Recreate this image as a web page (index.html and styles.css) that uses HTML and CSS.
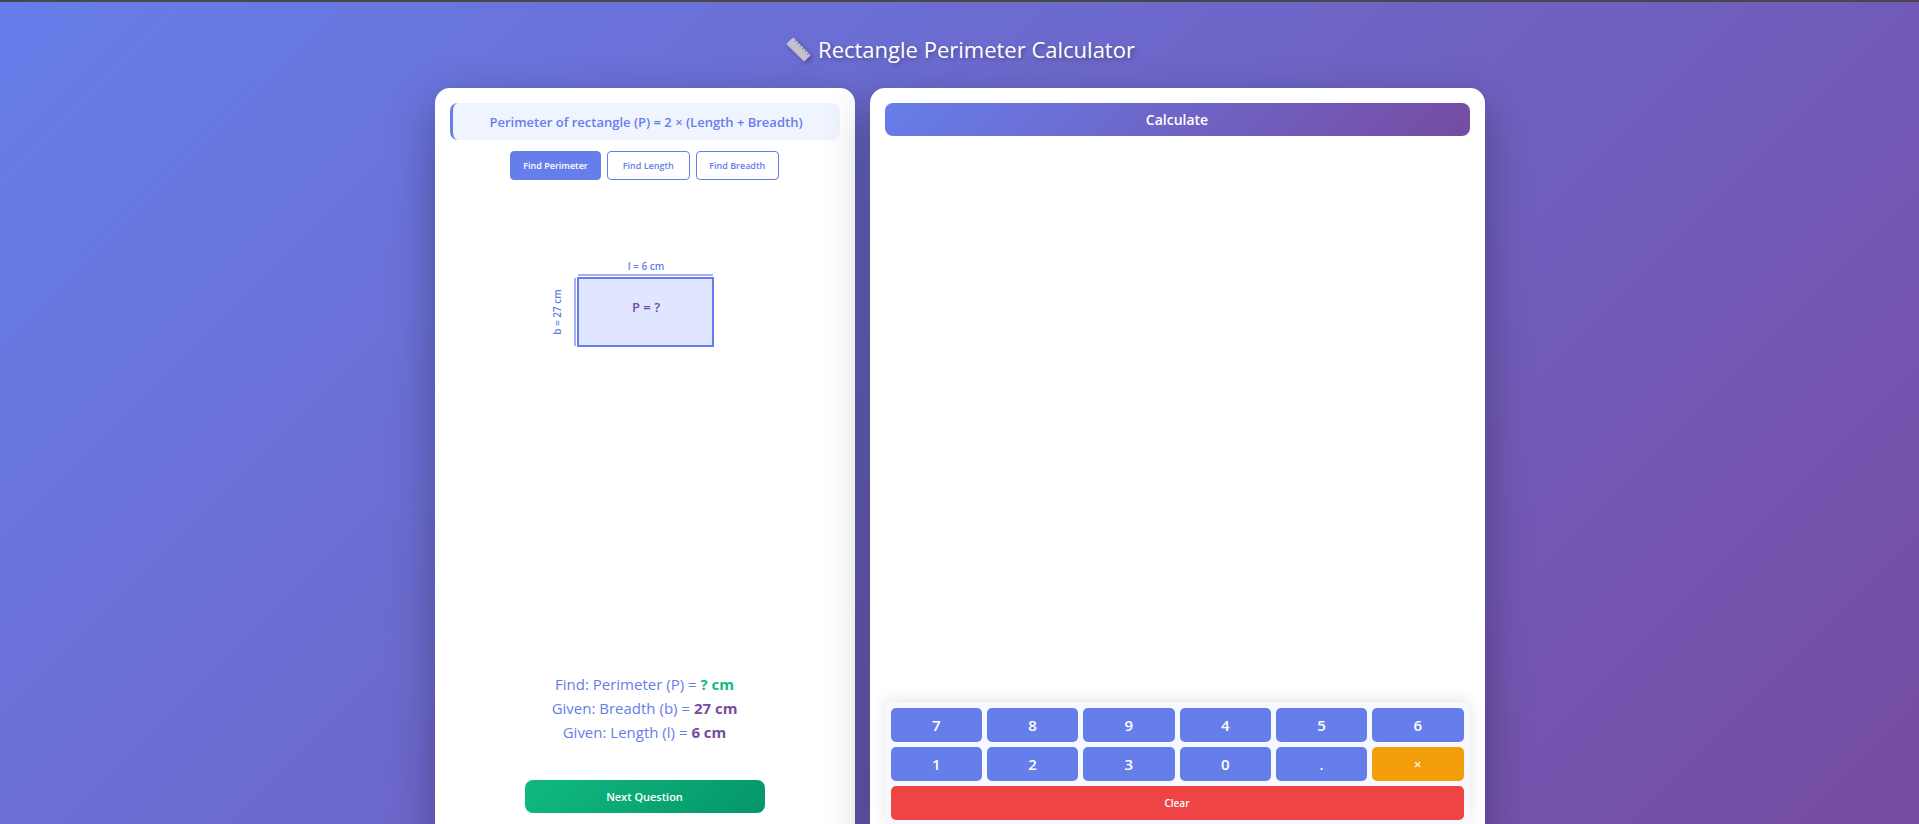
FILE: index.html
```html
<!DOCTYPE html>
<html lang="en">
<head>
  <meta charset="UTF-8" />
  <meta name="viewport" content="width=device-width, initial-scale=1.0"/>
  <title>Rectangle Perimeter Calculator</title>
  <link rel="stylesheet" href="styles.css">
</head>
<body>
  <header class="header">
    <svg class="ruler" viewBox="0 0 28 28" aria-hidden="true">
      <path d="M3 8 L8.500 3 Q9.500 2.500 10 3 L26 19.500 Q26.500 20.500 26 21 L21 25.700 Q20 26.200 19.500 25.700 L3 9.500 Q2.500 8.700 3 8 Z" fill="#c4c1cc" />
      <path d="M3 9.500 L19.500 25.700 Q20 26.200 21 25.700" fill="none" stroke="#b5b1be" />
      <path d="M12 5.500l-1.200 1.200M14.500 8l-1.200 1.200M17 10.600l-1.200 1.200M19.500 13.200l-1.200 1.200M22 15.800l-1.200 1.200M24.500 18.400l-1.200 1.200" stroke="#8377c4" stroke-width="1.200" />
    </svg>
    <h1>Rectangle Perimeter Calculator</h1>
  </header>

  <main class="container">
    <section class="panel left-panel">
      <div class="formula">Perimeter of rectangle (P) = 2 × (Length + Breadth)</div>

      <div class="modes">
        <button type="button" class="mode-btn active">Find Perimeter</button>
        <button type="button" class="mode-btn">Find Length</button>
        <button type="button" class="mode-btn">Find Breadth</button>
      </div>

      <div class="figure">
        <svg class="shape" viewBox="0 0 240 120" role="img" aria-label="Rectangle with length and breadth">
          <rect x="53" y="38" width="135" height="68" fill="#e0e6ff" stroke="#667eea" stroke-width="2" />
          <path d="M53 35H188M50 38V106" stroke="#667eea" stroke-width="2" stroke-opacity="0.6" />
          <text class="side" x="121" y="30">l = 6 cm</text>
          <text class="side" transform="translate(36 72) rotate(-90)">b = 27 cm</text>
          <text class="unknown" x="121" y="72">P = ?</text>
        </svg>
      </div>

      <div class="info">
        <p>Find: Perimeter (P) = <b class="find">? cm</b></p>
        <p>Given: Breadth (b) = <b>27 cm</b></p>
        <p>Given: Length (l) = <b>6 cm</b></p>
      </div>

      <button type="button" class="next-btn">Next Question</button>
    </section>

    <section class="panel right-panel">
      <h2 class="calc-title">Calculate</h2>
      <div class="work"></div>
      <div class="keypad">
        <button type="button">7</button>
        <button type="button">8</button>
        <button type="button">9</button>
        <button type="button">4</button>
        <button type="button">5</button>
        <button type="button">6</button>
        <button type="button">1</button>
        <button type="button">2</button>
        <button type="button">3</button>
        <button type="button">0</button>
        <button type="button">.</button>
        <button type="button" class="operator">×</button>
        <button type="button" class="clear">Clear</button>
      </div>
    </section>
  </main>
</body>
</html>
```

FILE: styles.css
```css
* {
  box-sizing: border-box;
  margin: 0;
  padding: 0;
}
body {
  font-family: 'Segoe UI', 'Open Sans', sans-serif;
  background: linear-gradient(135deg, #667eea 0%, #764ba2 100%);
  height: 100vh;
  overflow: hidden;
  border-top: 2px solid #484848;
}
.header {
  display: flex;
  justify-content: center;
  align-items: center;
  gap: 6px;
  height: 86px;
  padding-top: 8px;
  color: white;
}
.header h1 {
  font-size: 22px;
  font-weight: 400;
  text-shadow: 2px 2px 4px rgba(0,0,0,0.3);
}
.ruler {
  width: 28px;
  height: 28px;
  filter: drop-shadow(2px 2px 2px rgba(0,0,0,0.3));
}
.container {
  display: grid;
  grid-template-columns: 420fr 615fr;
  gap: 15px;
  max-width: 1050px;
  height: calc(100vh - 71px);
  margin: 0 auto;
}
.panel {
  display: flex;
  flex-direction: column;
  background: white;
  border-radius: 15px;
  padding: 15px;
  box-shadow: 0 15px 45px rgba(0,0,0,0.3);
}
button {
  font-family: inherit;
  border: none;
  cursor: pointer;
}
.formula {
  background: #f0f4ff;
  border-left: 3px solid #667eea;
  border-radius: 8px;
  padding: 9px 8px 7px;
  color: #667eea;
  font-size: 13px;
  font-weight: 600;
  line-height: 21px;
  text-align: center;
}
.modes {
  display: flex;
  justify-content: center;
  gap: 6px;
  margin-top: 11px;
}
.mode-btn {
  min-width: 83px;
  height: 29px;
  padding: 0 12px;
  background: white;
  border: 1px solid #667eea;
  border-radius: 4px;
  color: #667eea;
  font-size: 9px;
  font-weight: 600;
}
.mode-btn.active {
  background: #667eea;
  color: white;
}
.figure {
  flex: 1;
  padding-top: 60px;
  text-align: center;
}
.shape {
  width: 240px;
  height: 120px;
}
.shape text {
  text-anchor: middle;
}
.side {
  fill: #667eea;
  font-size: 10px;
  font-weight: 600;
}
.unknown {
  fill: #764ba2;
  font-size: 13px;
  font-weight: 600;
}
.info {
  margin-bottom: 36px;
  color: #667eea;
  font-size: 15px;
  font-weight: 500;
  line-height: 24px;
  text-align: center;
}
.info b {
  color: #764ba2;
}
.info .find {
  color: #10b981;
}
.next-btn {
  width: 240px;
  height: 33px;
  margin: 0 auto 13px;
  background: linear-gradient(135deg, #10b981 0%, #059669 100%);
  border-radius: 8px;
  color: white;
  font-size: 11px;
  font-weight: 600;
}
.calc-title {
  background: linear-gradient(135deg, #667eea 0%, #764ba2 100%);
  border-radius: 8px;
  color: white;
  font-size: 14px;
  font-weight: 600;
  line-height: 33px;
  text-align: center;
}
.work {
  flex: 1;
}
.keypad {
  display: grid;
  grid-template-columns: repeat(6, 1fr);
  grid-auto-rows: 34px;
  gap: 5px;
  padding: 6px;
  background: #f8f9ff;
  border-radius: 8px;
  box-shadow: 0 -3px 15px rgba(0,0,0,0.1);
}
.keypad button {
  background: #667eea;
  border-radius: 5px;
  color: white;
  font-size: 15px;
  font-weight: 600;
}
.keypad .operator {
  background: #f59e0b;
  font-size: 13px;
}
.keypad .clear {
  grid-column: 1 / -1;
  background: #ef4444;
  font-size: 10px;
}
```
